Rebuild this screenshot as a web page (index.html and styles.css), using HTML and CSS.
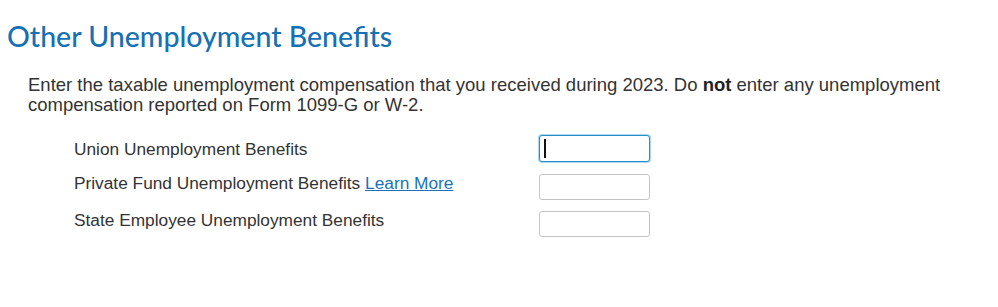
FILE: index.html
```html
<!DOCTYPE html>
<html lang="en">
<head>
<meta charset="utf-8">
<title>Other Unemployment Benefits</title>
<link rel="stylesheet" href="styles.css">
</head>
<body>
<main class="page">
  <h1 class="title">Other Unemployment Benefits</h1>
  <p class="intro">Enter the taxable unemployment compensation that you received during 2023. Do <strong>not</strong> enter any unemployment compensation reported on Form 1099-G or W-2.</p>
  <div class="fields">
    <div class="row row-first">
      <label class="label" for="union">Union Unemployment Benefits</label>
      <span class="field-wrap has-caret"><input class="field field-focus" id="union" type="text"></span>
    </div>
    <div class="row">
      <label class="label" for="private">Private Fund Unemployment Benefits <a class="link" href="#">Learn More</a></label>
      <span class="field-wrap"><input class="field" id="private" type="text"></span>
    </div>
    <div class="row">
      <label class="label" for="state">State Employee Unemployment Benefits</label>
      <span class="field-wrap"><input class="field" id="state" type="text"></span>
    </div>
  </div>
</main>
</body>
</html>
```
FILE: styles.css
```css
html, body {
  margin: 0;
  padding: 0;
  background: #ffffff;
}

.page {
  padding: 19px 0 0 7px;
  font-family: "Liberation Sans", Arial, sans-serif;
  color: #333333;
}

.title {
  margin: 0;
  font-family: Lato, "Open Sans", sans-serif;
  font-weight: 500;
  font-size: 28.5px;
  line-height: 34px;
  color: #1670b4;
}

.intro {
  margin: 22px 0 0 21px;
  font-size: 18.5px;
  line-height: 20px;
  max-width: 940px;
}

.intro strong {
  font-weight: 700;
  color: #222222;
}

.fields {
  margin: 20px 0 0 67px;
  display: flex;
  flex-direction: column;
  gap: 11px;
}

.row {
  display: grid;
  grid-template-columns: 465px 111px;
  align-items: start;
}

.label {
  font-size: 17.3px;
  line-height: 18px;
  color: #333333;
}

.row-first .label {
  padding-top: 5px;
}

.row-first + .row {
  margin-top: 1px;
}

.link {
  color: #1a73b9;
  text-decoration: underline;
}

.field-wrap {
  position: relative;
  display: block;
  width: 111px;
}

.has-caret::after {
  content: "";
  position: absolute;
  left: 5px;
  top: 4px;
  width: 2px;
  height: 19px;
  background: #111111;
}

.field {
  display: block;
  box-sizing: border-box;
  width: 111px;
  height: 26px;
  margin: 0;
  padding: 0 4px;
  border: 1px solid #c4c4c4;
  border-radius: 3px;
  background: #ffffff;
  font-family: "Liberation Sans", Arial, sans-serif;
  font-size: 16px;
  outline: none;
}

.field-focus {
  height: 27px;
  border: 1px solid #2a8fc9;
  box-shadow: 0 0 0 1px #a9d8f0;
}
```
